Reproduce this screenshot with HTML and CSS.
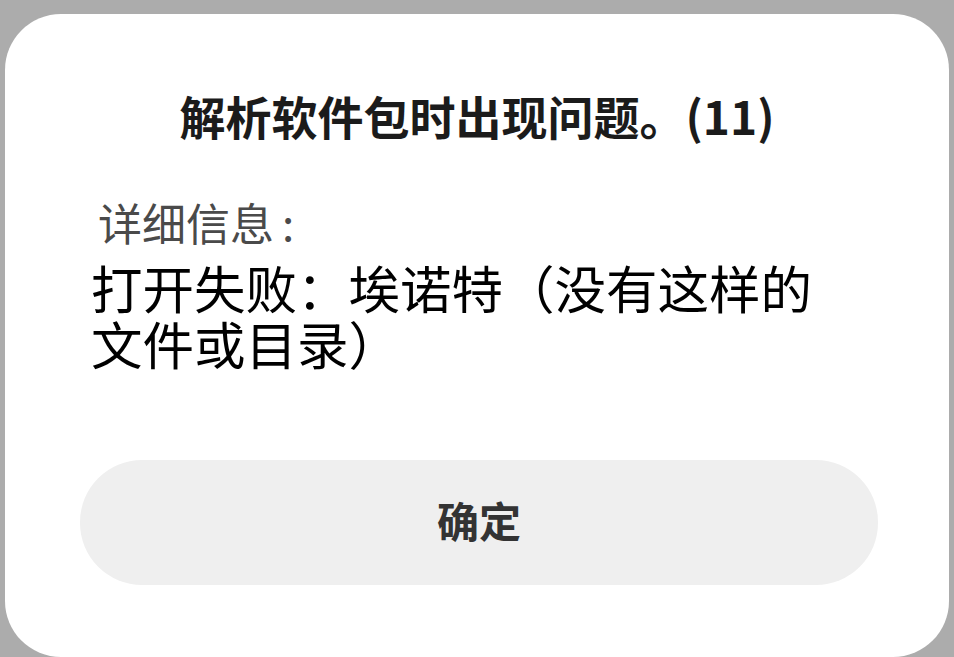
FILE: index.html
```html
<!DOCTYPE html>
<html lang="zh-CN">
<head>
<meta charset="utf-8">
<link rel="stylesheet" href="styles.css">
</head>
<body>
<div class="dialog">
  <h1 class="title">解析软件包时出现问题。(11)</h1>
  <div class="label">详细信息<span class="colon">:</span></div>
  <p class="message">打开失败：埃诺特（没有这样的文件或目录）</p>
  <div class="button">确定</div>
</div>
</body>
</html>
```
FILE: styles.css
```css
html, body {
  margin: 0;
  padding: 0;
  background: #acacac;
  width: 954px;
  height: 657px;
  overflow: hidden;
}
body {
  font-family: "Noto Sans CJK SC", "Noto Sans", sans-serif;
  padding-top: 14px;
  padding-left: 5px;
  box-sizing: border-box;
}
.dialog {
  width: 944px;
  height: 643px;
  background: #ffffff;
  border-radius: 56px;
  padding-top: 71px;
  box-sizing: border-box;
  display: flex;
  flex-direction: column;
}
.title {
  margin: 0;
  text-align: center;
  font-size: 46px;
  line-height: 60px;
  font-weight: 700;
  color: #1b1b1b;
}
.label {
  margin: 52px 0 0 93px;
  font-size: 44px;
  line-height: 50px;
  color: #4a4a4a;
}
.colon {
  margin-left: 8px;
}
.message {
  margin: 12px 0 0 86px;
  width: 750px;
  font-size: 51.5px;
  line-height: 56px;
  color: #000000;
}
.button {
  margin: 89px 0 0 75px;
  width: 798px;
  height: 125px;
  padding-bottom: 6px;
  box-sizing: border-box;
  border-radius: 62px;
  background: #efefef;
  display: flex;
  align-items: center;
  justify-content: center;
  font-size: 42px;
  font-weight: 700;
  color: #333333;
}
```
